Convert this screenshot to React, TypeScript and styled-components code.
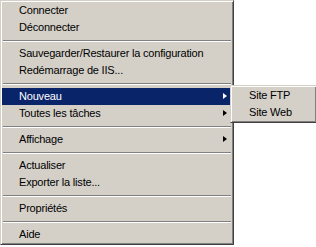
import React from 'react';
import styled, {createGlobalStyle} from 'styled-components';

const colors = {
  face: '#d4d0c8',
  light: '#ffffff',
  shadow: '#808080',
  darkShadow: '#404040',
  highlight: '#0a246a',
  text: '#000000'
};

const GlobalStyle = createGlobalStyle`
  html, body {
    margin: 0;
    padding: 0;
    background: #ffffff;
  }
  body {
    font-family: Tahoma, "Liberation Sans", Arial, sans-serif;
    font-size: 11px;
    letter-spacing: -0.2px;
  }
`;

const Menu = styled.div<{width: number}>`
  position: relative;
  box-sizing: border-box;
  width: ${(p) => p.width}px;
  background: ${colors.face};
  padding: 1px;
  border-style: solid;
  border-width: 1px;
  border-color: ${colors.face} ${colors.darkShadow} ${colors.darkShadow} ${colors.face};
  box-shadow: inset 1px 1px 0 ${colors.light}, inset -1px -1px 0 ${colors.shadow};
  display: flex;
  flex-direction: column;
`;

const Item = styled.div<{active?: boolean}>`
  position: relative;
  height: 17px;
  line-height: 17px;
  padding-left: 17px;
  color: ${(p) => (p.active ? colors.light : colors.text)};
  background: ${(p) => (p.active ? colors.highlight : 'transparent')};
  white-space: nowrap;
`;

const Arrow = styled.span<{active?: boolean}>`
  position: absolute;
  right: 5px;
  top: 5px;
  width: 0;
  height: 0;
  border-style: solid;
  border-width: 3.5px 0 3.5px 4px;
  border-color: transparent transparent transparent ${(p) => (p.active ? colors.light : colors.text)};
`;

const Separator = styled.div`
  height: 9px;
  display: flex;
  flex-direction: column;
  justify-content: center;
  padding: 0 1px;
  &::before {
    content: '';
    display: block;
    height: 1px;
    background: ${colors.shadow};
  }
  &::after {
    content: '';
    display: block;
    height: 1px;
    background: ${colors.light};
  }
`;

const SubMenu = styled(Menu)`
  position: absolute;
  top: -3px;
  left: calc(100% - 2px);
  z-index: 2;
`;

type Entry = {label: string; submenu?: boolean; active?: boolean} | 'sep';

const entries: Entry[] = [
  {label: 'Connecter'},
  {label: 'Déconnecter'},
  'sep',
  {label: 'Sauvegarder/Restaurer la configuration'},
  {label: 'Redémarrage de IIS...'},
  'sep',
  {label: 'Nouveau', submenu: true, active: true},
  {label: 'Toutes les tâches', submenu: true},
  'sep',
  {label: 'Affichage', submenu: true},
  'sep',
  {label: 'Actualiser'},
  {label: 'Exporter la liste...'},
  'sep',
  {label: 'Propriétés'},
  'sep',
  {label: 'Aide'}
];

const App = () => {
  return (
    <>
      <GlobalStyle />
      <Menu width={234}>
        {entries.map((e, i) =>
          e === 'sep' ? (
            <Separator key={i} />
          ) : (
            <Item key={i} active={e.active}>
              {e.label}
              {e.submenu && <Arrow active={e.active} />}
              {e.active && (
                <SubMenu width={87}>
                  <Item>Site FTP</Item>
                  <Item>Site Web</Item>
                </SubMenu>
              )}
            </Item>
          )
        )}
      </Menu>
    </>
  );
};

export default App;
